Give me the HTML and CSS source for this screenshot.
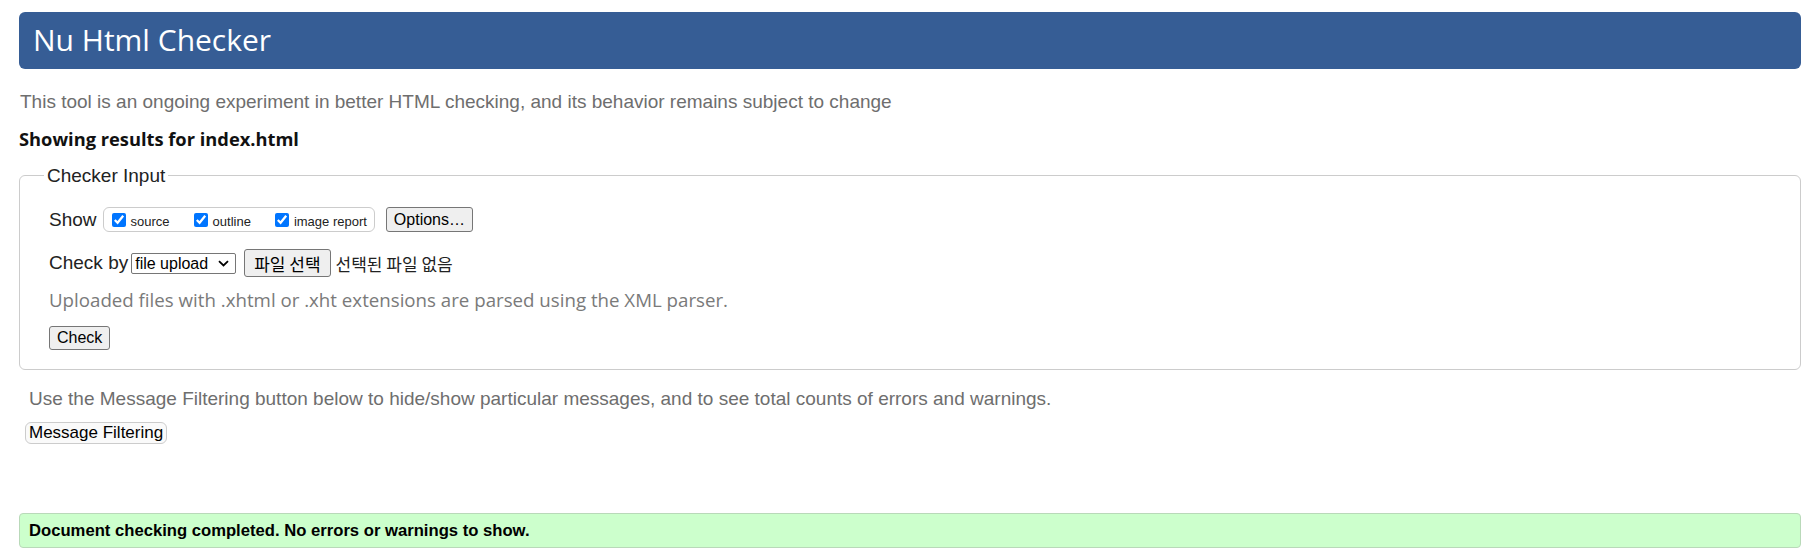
FILE: index.html
```html
<!DOCTYPE html>
<html lang="en">
<head>
<meta charset="utf-8">
<title>Nu Html Checker</title>
<link rel="stylesheet" href="styles.css">
</head>
<body>
<h1 class="title">Nu Html Checker</h1>
<p class="tagline">This tool is an ongoing experiment in better HTML checking, and its behavior remains subject to change</p>
<h2 class="results">Showing results for index.html</h2>
<fieldset class="input-box">
  <legend class="legend">Checker Input</legend>
  <div class="row show-row">
    <span class="row-label">Show</span>
    <span class="check-group">
      <label class="check"><input type="checkbox" checked><span>source</span></label>
      <label class="check"><input type="checkbox" checked><span>outline</span></label>
      <label class="check"><input type="checkbox" checked><span>image report</span></label>
    </span>
    <button class="btn options-btn" type="button">Options…</button>
  </div>
  <div class="row checkby-row">
    <span class="row-label">Check by</span>
    <span class="select-wrap">
      <select class="select"><option>file upload</option></select>
      <svg class="chevron" width="11" height="7" viewBox="0 0 11 7" aria-hidden="true"><path d="M1 1.2 L5.5 5.5 L10 1.2" fill="none" stroke="#000" stroke-width="1.8"/></svg>
    </span>
    <button class="btn file-btn" type="button">파일 선택</button>
    <span class="file-status">선택된 파일 없음</span>
  </div>
  <p class="hint">Uploaded files with .xhtml or .xht extensions are parsed using the XML parser.</p>
  <div class="row submit-row">
    <button class="btn check-btn" type="submit">Check</button>
  </div>
</fieldset>
<p class="filter-note">Use the Message Filtering button below to hide/show particular messages, and to see total counts of errors and warnings.</p>
<button class="filter-btn" type="button">Message Filtering</button>
<div class="success">Document checking completed. No errors or warnings to show.</div>
</body>
</html>
```
FILE: styles.css
```css
html, body {
  background: #ffffff;
}
body {
  margin: 0;
  padding: 12px 19px 0 19px;
  font-family: "Liberation Sans", Arial, sans-serif;
  color: #222222;
}
.title {
  margin: 0;
  height: 57px;
  display: flex;
  align-items: center;
  padding: 0 0 2px 14px;
  box-sizing: border-box;
  background: #365d95;
  border-radius: 6px;
  color: #ffffff;
  font-family: "Open Sans", "Noto Sans", sans-serif;
  font-weight: 400;
  font-size: 30px;
}
.tagline {
  margin: 22px 0 0 1px;
  font-size: 19px;
  line-height: 22px;
  color: #6e6e6e;
}
.results {
  margin: 15px 0 0 0;
  font-family: "Open Sans", "Noto Sans", sans-serif;
  font-weight: 700;
  font-size: 18.3px;
  line-height: 22px;
  color: #111111;
}
.input-box {
  margin: 15px 0 0 0;
  padding: 21px 24px 19px 24px;
  border: 1px solid #cccccc;
  border-radius: 6px;
  min-width: 0;
}
.legend {
  padding: 0 3px;
  font-size: 19px;
  line-height: 21px;
  color: #222222;
}
.row {
  display: flex;
  align-items: center;
  padding-left: 5px;
}
.row-label {
  font-size: 19px;
  color: #222222;
}
.show-row {
  height: 25px;
}
.check-group {
  display: inline-flex;
  align-items: baseline;
  gap: 24px;
  margin-left: 6px;
  height: 25px;
  box-sizing: border-box;
  padding: 4px 7px 0 8px;
  border: 1px solid #cccccc;
  border-radius: 6px;
}
.check {
  display: inline-flex;
  align-items: flex-end;
  gap: 5px;
  font-size: 13px;
  color: #222222;
}
.check input {
  margin: 0;
  width: 14px;
  height: 14px;
}
.check span {
  position: relative;
  top: 2px;
}
.btn {
  font-family: "Liberation Sans", Arial, sans-serif;
  font-size: 16px;
  color: #000000;
  background: #efefef;
  border: 1px solid #767676;
  border-radius: 3px;
  padding: 0 7px;
}
.options-btn {
  margin-left: 11px;
  height: 25px;
}
.checkby-row {
  margin-top: 17px;
  height: 28px;
}
.select-wrap {
  position: relative;
  display: inline-flex;
  margin-left: 3px;
}
.select {
  appearance: none;
  -webkit-appearance: none;
  width: 105px;
  height: 21px;
  font-family: "Liberation Sans", Arial, sans-serif;
  font-size: 16px;
  line-height: 19px;
  color: #000000;
  background: #ffffff;
  border: 1px solid #767676;
  border-radius: 2px;
  padding: 0 0 0 3px;
}
.chevron {
  position: absolute;
  right: 7px;
  top: 7px;
  pointer-events: none;
}
.file-btn {
  margin-left: 8px;
  height: 28px;
  padding: 0 9px;
  font-family: "Noto Sans CJK KR", sans-serif;
  font-size: 17px;
}
.file-status {
  margin-left: 5px;
  font-family: "Noto Sans CJK KR", sans-serif;
  font-size: 17px;
  color: #222222;
}
.hint {
  margin: 12px 0 0 0;
  padding-left: 5px;
  font-family: "Open Sans", "Noto Sans", sans-serif;
  font-size: 18.7px;
  line-height: 22px;
  color: #7a7a7a;
}
.submit-row {
  margin-top: 15px;
}
.check-btn {
  height: 24px;
}
.filter-note {
  margin: 18px 0 0 10px;
  font-size: 19px;
  line-height: 22px;
  color: #6e6e6e;
}
.filter-btn {
  display: block;
  margin: 12px 0 0 6px;
  height: 22px;
  padding: 0 3px;
  font-family: "Liberation Sans", Arial, sans-serif;
  font-size: 17px;
  color: #000000;
  background: #fafafa;
  border: 1px solid #cccccc;
  border-radius: 6px;
}
.success {
  margin-top: 69px;
  height: 35px;
  box-sizing: border-box;
  display: flex;
  align-items: center;
  padding-left: 9px;
  background: #ccffcc;
  border: 1px solid #b9d9b9;
  border-radius: 4px;
  font-weight: 700;
  font-size: 16.65px;
  color: #000000;
}
```
